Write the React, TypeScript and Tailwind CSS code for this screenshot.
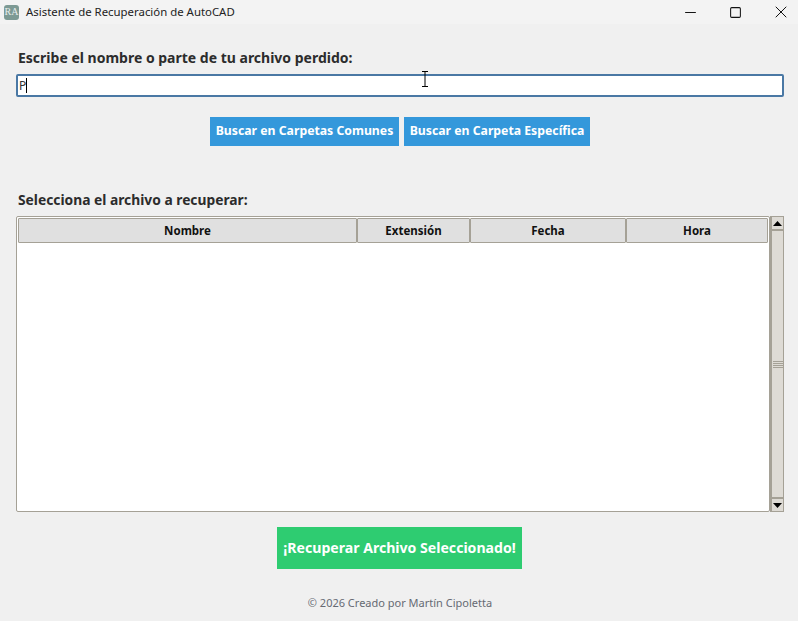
import { Minus, Square, X } from "lucide-react"

const font = "font-['Noto_Sans','Open_Sans',sans-serif]"

function AppIcon() {
  return (
    <div className="w-[15px] h-[15px] rounded-[3px] bg-[#7d9a94] flex items-center justify-center text-[#e6eeec] text-[10px] leading-none font-['Liberation_Serif',serif]">
      RA
    </div>
  )
}

function HeaderCell({ label, className }: { label: string; className: string }) {
  return (
    <div className={`${className} h-[25px] flex items-center justify-center bg-[#e0e0e0] border border-[#a5a196] rounded-[1px] text-[11.5px] font-bold text-[#111] leading-none`}>
      {label}
    </div>
  )
}

function ScrollArrow({ up }: { up?: boolean }) {
  return (
    <div className={`h-[14px] shrink-0 flex items-center justify-center bg-[#dedbd5] ${up ? "border-b-2" : "border-t-2"} border-[#a5a196]`}>
      <svg width="9" height="5" viewBox="0 0 9 5">
        <path d={up ? "M4.5 0L9 5H0Z" : "M0 0H9L4.5 5Z"} fill="#000" />
      </svg>
    </div>
  )
}

export default function App() {
  return (
    <div className={`w-[798px] h-[621px] overflow-hidden bg-[#f0f0f0] flex flex-col ${font}`}>
      <div className="h-[24px] shrink-0 bg-[#f3f3f3] flex items-center pl-[4px]">
        <AppIcon />
        <span className="ml-[7px] text-[11.4px] text-[#222] leading-none">Asistente de Recuperación de AutoCAD</span>
        <div className="ml-auto flex items-center pr-[7px] text-[#111]">
          <Minus className="w-[17px] h-[17px]" strokeWidth={1.4} />
          <Square className="w-[13px] h-[13px] ml-[30px]" strokeWidth={1.9} />
          <X className="w-[20px] h-[20px] ml-[29px]" strokeWidth={1.2} />
        </div>
      </div>

      <div className="pl-[16px] pr-[14px] flex flex-col">
        <div className="mt-[24px] pl-[2px] h-[20px] flex items-center text-[14px] font-bold text-[#2c2c2c] leading-none">
          Escribe el nombre o parte de tu archivo perdido:
        </div>
        <div className="relative mt-[6px] h-[23px] bg-white border-2 border-[#4a78a4] rounded-[2px] flex items-center text-[12px] text-[#333] pl-[1px] leading-none">
          P<span className="w-px h-[15px] bg-black" />
          <svg className="absolute left-[403px] top-[-5px]" width="8" height="16" viewBox="0 0 8 16" fill="none">
            <path d="M1 .5H7M4 .5V15.5M1 15.5H7" stroke="#000" strokeWidth="1" />
          </svg>
        </div>

        <div className="mt-[20px] flex justify-center gap-[5px]">
          <button className="w-[189px] h-[29px] bg-[#3498db] text-white text-[12.25px] font-bold leading-none">
            Buscar en Carpetas Comunes
          </button>
          <button className="w-[186px] h-[29px] bg-[#3498db] text-white text-[12.25px] font-bold leading-none">
            Buscar en Carpeta Específica
          </button>
        </div>

        <div className="mt-[44px] pl-[2px] h-[20px] flex items-center text-[13.8px] font-bold text-[#2c2c2c] leading-none">
          Selecciona el archivo a recuperar:
        </div>

        <div className="mt-[6px] h-[296px] flex">
          <div className="w-[754px] bg-white border border-[#a5a196] rounded-[2px] p-px">
            <div className="flex">
              <HeaderCell label="Nombre" className="w-[339px]" />
              <HeaderCell label="Extensión" className="w-[113px]" />
              <HeaderCell label="Fecha" className="w-[156px]" />
              <HeaderCell label="Hora" className="w-[142px]" />
            </div>
          </div>
          <div className="w-[14px] flex flex-col bg-[#dedbd5] border-l-2 border-r border-y border-[#a5a196]">
            <ScrollArrow up />
            <div className="flex-1 flex flex-col items-center justify-center gap-px">
              <div className="w-[10px] h-px bg-[#a5a196]" />
              <div className="w-[10px] h-px bg-[#a5a196]" />
              <div className="w-[10px] h-px bg-[#a5a196]" />
              <div className="w-[10px] h-px bg-[#a5a196]" />
            </div>
            <ScrollArrow />
          </div>
        </div>

        <div className="mt-[15px] flex justify-center pr-[1px]">
          <button className="w-[245px] h-[42px] bg-[#2ecc71] text-white text-[14.1px] font-bold leading-none">
            ¡Recuperar Archivo Seleccionado!
          </button>
        </div>

        <div className="mt-[27px] text-center text-[11px] text-[#666a73] leading-[14px]">
          © 2026 Creado por Martín Cipoletta
        </div>
      </div>
    </div>
  )
}
